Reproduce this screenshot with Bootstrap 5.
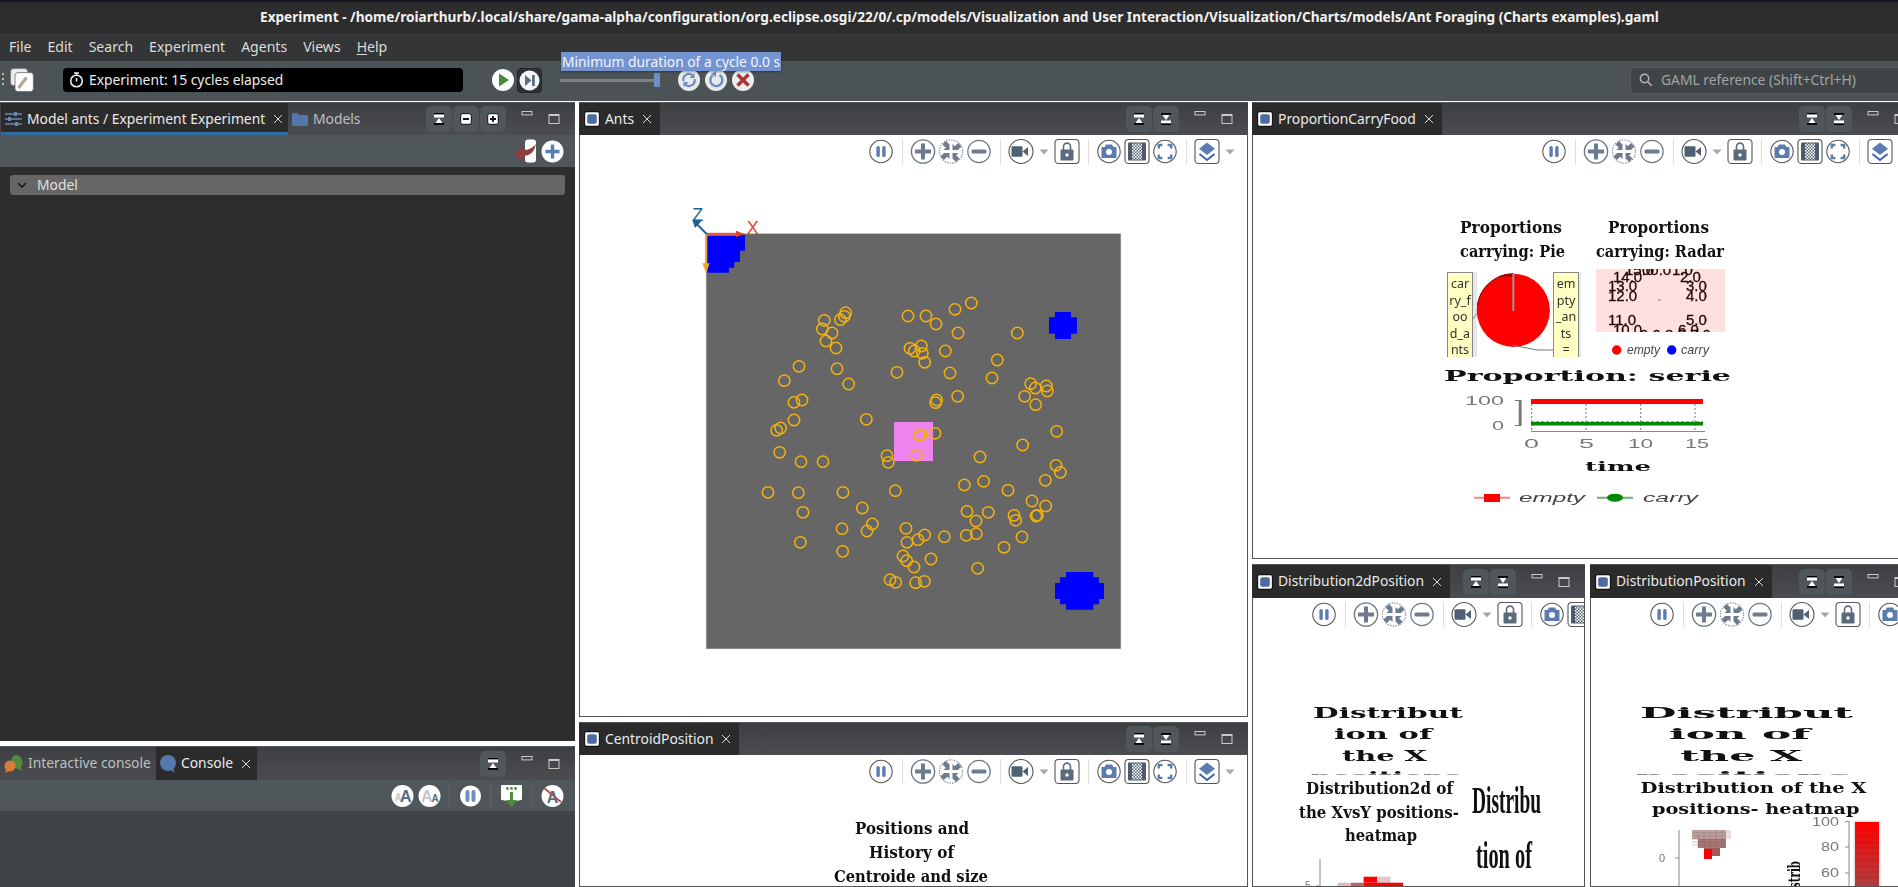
<!DOCTYPE html>
<html lang="en">
<head>
<meta charset="utf-8">
<title>Experiment - Ant Foraging</title>
<link href="https://cdn.jsdelivr.net/npm/bootstrap@5.3.0/dist/css/bootstrap.min.css" rel="stylesheet">
<style>
html,body{height:100%;margin:0;overflow:hidden;background:#fff}
body{font-family:"Noto Sans",sans-serif;font-size:13.85px;color:#e4e4e4;width:1898px;height:887px;position:relative}
svg{display:block;flex:none}
.deskline{height:2px;background:#15131f}
.titlebar{height:31px;background:#2d2d2d;color:#f2f2f2;font-weight:700;font-size:13.63px;white-space:nowrap;padding-left:260px;display:flex;align-items:center}
.menubar{height:28px;background:#333536;display:flex;align-items:center;gap:16px;padding-left:9px;color:#dcdcdc;font-size:14.05px}
.menubar u{text-underline-offset:2px}
.maintools{height:40px;padding-bottom:2px;background:#4c5356;display:flex;align-items:center}
.grip{width:2px;height:14px;margin-left:2px;background:repeating-linear-gradient(#b8b8b8 0 2px,transparent 2px 5px)}
.editic{margin-left:6px}
.statusbox{margin-left:29px;width:400px;height:24px;background:#000;border-radius:4px;display:flex;align-items:center;padding-left:6px;gap:5px;color:#ececec}
.playic{margin-left:28px}
.stepbox{margin-left:2px;width:25px;height:25px;background:#2f3234;border:1px solid #232526;border-radius:4px;display:flex;align-items:center;justify-content:center}
.slidertrack{margin-left:18px;width:100px;height:3px;background:#7c8184;position:relative}
.sliderthumb{position:absolute;right:0;top:-6px;width:6px;height:14px;background:#6f8fc7;border-radius:1px}
.cycleic{margin-left:3px}
.cycleic.firstic{margin-left:17px}
.findbox{margin-left:auto;width:268px;height:27px;background:#3f4447;border:1px solid #565c5f;border-right:0;border-radius:3px 0 0 3px;display:flex;align-items:center;padding-left:8px;gap:8px;color:#a0a4a6}
.durtip{position:absolute;left:561px;top:52px;height:19px;padding:0 1px;background:#7393d1;color:#f3f6fc;line-height:19px;font-size:13.8px;white-space:nowrap;box-shadow:0 1px 2px rgba(0,0,0,.35)}
.workbench{width:1921px;height:785px;display:grid;grid-template-columns:575px 669px 669px;column-gap:4px;overflow:hidden;margin-top:1px;background:#fff}
.wcol{display:flex;flex-direction:column;gap:5px;min-height:0;height:785px}
.wrow{display:flex;gap:5px;flex:1;min-height:0}
.pane{display:flex;flex-direction:column;min-height:0;min-width:0}
.pane-model{height:639px;background:#2e2e2e}
.pane-console{flex:1;background:#3f4447}
.pane-ants{height:615px}
.pane-carry{height:457px}
.pane-fill{flex:1}
.pane-d2{width:333px}
.pane-d1{width:331px}
.phead{height:33px;flex:none;display:flex;align-items:stretch;background:linear-gradient(#3d3f42,#4c4d50);border-top:1px solid #55585a}
.phead.tallhead{height:34px}
.ptab{display:flex;align-items:center;background:#2b2b2b;padding:0 8px 0 5px;gap:5px;color:#eaeaea;white-space:nowrap}
.ptab.ptab-active-blue{box-shadow:inset 0 -3px 0 #2d6ba3;margin-left:1px;width:287px;padding-left:4px}
.ptab-flat{background:none;color:#bcc0c2;padding-left:4px}
.ptab-interactive{width:156px}
.ptab-console{width:101px;padding-left:4px}
.xclose{margin-left:3px}
.hctl{margin-left:auto;display:flex;align-items:center;padding-right:14px}
.hbtn{width:26px;height:26px;background:#50575a;border-radius:5px;margin-left:1px;display:flex;align-items:center;justify-content:center}
.hmin{margin-left:14px}
.hmax{margin-left:13px}
.vtools{height:32px;flex:none;background:#fff;display:flex;align-items:center;padding-left:287px;border-left:1px solid #555;border-right:1px solid #555;overflow:hidden}
.vtools.narrowtools{padding-left:57px;height:33px}
.vsep{width:1px;height:25px;background:#ddd;margin:0 6.5px;flex:none}
.pbody{flex:1;background:#fff;border:1px solid #555;border-top:0;overflow:hidden;min-height:0}
.chartblur{filter:blur(.3px)}
.ptools{height:32px;flex:none;background:#50575a;display:flex;align-items:center;justify-content:flex-end;padding-right:11px}
.ctools{height:31px;flex:none;background:#50575a;display:flex;align-items:center;justify-content:flex-end;padding-right:9.5px}
.csep{width:1px;height:25px;background:#5d6467;margin:0 6.5px}
.modelbody{padding:8px 10px}
.modelrow{height:20px;background:#666;border-radius:3px;display:flex;align-items:center;padding-left:7px;gap:10px;color:#e0e0e0}
.fs{font-family:"DejaVu Serif",serif;font-weight:700;fill:#111}
.ls{font-family:"Liberation Serif",serif;font-weight:700;fill:#111}
.sa{font-family:"Liberation Sans",sans-serif;fill:#777}
.it{font-family:"Liberation Sans",sans-serif;font-style:italic;fill:#444}
.lab{font-family:"Noto Sans",sans-serif;fill:#333;font-size:12.5px;text-anchor:middle}
.rad{font-family:"Liberation Sans",sans-serif;fill:#220808;stroke:#220808;stroke-width:.3;font-size:15px}
</style>
</head>
<body>
<svg width="0" height="0" class="position-absolute">
<defs>
<pattern id="dotp" width="3" height="3" patternUnits="userSpaceOnUse"><rect width="3" height="3" fill="#5a6878"/><rect width="1.5" height="1.5" fill="#fff"/><rect x="1.5" y="1.5" width="1.5" height="1.5" fill="#fff"/></pattern>
<linearGradient id="bargrad" x1="0" y1="0" x2="0" y2="1"><stop offset="0" stop-color="#f00"/><stop offset="1" stop-color="#a84545"/></linearGradient>
<symbol id="i-pause" viewBox="0 0 28 33"><circle cx="14" cy="16.5" r="11.2" fill="#fff" stroke="#555" stroke-width="1.1"/><rect x="9.4" y="11" width="3.4" height="11" rx="1.6" fill="#5c7cb0"/><rect x="15.2" y="11" width="3.4" height="11" rx="1.6" fill="#5c7cb0"/></symbol>
<symbol id="i-plus" viewBox="0 0 28 33"><circle cx="14" cy="16.5" r="11.6" fill="#fff" stroke="#6e7784" stroke-width="1.4"/><path d="M14 8.5v16M6 16.5h16" stroke="#6c7b90" stroke-width="4"/></symbol>
<symbol id="i-fit" viewBox="0 0 28 33"><circle cx="14" cy="16.5" r="11.6" fill="#fff" stroke="#8b8f95" stroke-width="1.2" stroke-dasharray="1.4 1.2"/><g fill="#6c7b90"><path d="M12.5 15H6.500L8.800 12.700L5.500 9.400L8.900 6L12.200 9.300L12.500 9z"/><path d="M12.5 15H6.500L8.800 12.700L5.500 9.400L8.900 6L12.200 9.300L12.500 9z" transform="rotate(90 14 16.5)"/><path d="M12.5 15H6.500L8.800 12.700L5.500 9.400L8.900 6L12.200 9.300L12.500 9z" transform="rotate(180 14 16.5)"/><path d="M12.5 15H6.500L8.800 12.700L5.500 9.400L8.900 6L12.200 9.300L12.500 9z" transform="rotate(270 14 16.5)"/></g></symbol>
<symbol id="i-minus" viewBox="0 0 28 33"><circle cx="14" cy="16.5" r="11.2" fill="#fff" stroke="#6e7784" stroke-width="1.2"/><rect x="6.5" y="14.5" width="15" height="4" rx="1.5" fill="#6c7b90"/></symbol>
<symbol id="i-cam" viewBox="0 0 28 33"><circle cx="14" cy="16.5" r="12" fill="#fff" stroke="#555" stroke-width="1.1"/><rect x="4.5" y="11.2" width="11" height="10.6" rx="1.2" fill="#4f6076"/><path d="M15.5 16.5l5.5-4.6v9.2z" fill="#4f6076"/></symbol>
<symbol id="i-lock" viewBox="0 0 28 33"><rect x="2" y="4.5" width="24" height="24" rx="3.5" fill="#fff" stroke="#555" stroke-width="1.1"/><path d="M10.5 15v-3.4a3.5 3.5 0 0 1 7 0V15" fill="none" stroke="#5c6a7d" stroke-width="1.6"/><rect x="7.5" y="14.5" width="13" height="11" rx="1" fill="#5c6a7d"/><circle cx="14" cy="20" r="1.7" fill="#fff"/></symbol>
<symbol id="i-snap" viewBox="0 0 28 33"><circle cx="14" cy="16.5" r="11.2" fill="#fff" stroke="#555" stroke-width="1.1"/><path d="M6.5 12h3l1.6-2.5h5.8l1.6 2.5h3v11h-15z" fill="#5c7cb0"/><circle cx="14" cy="17" r="3" fill="#fff"/></symbol>
<symbol id="i-tex" viewBox="0 0 28 33"><rect x="2" y="4.5" width="24" height="24" rx="3.5" fill="#fff" stroke="#555" stroke-width="1.1"/><rect x="5" y="7.5" width="18" height="18" rx="1" fill="#4d5b6c"/><rect x="9" y="8.500" width="10" height="16" fill="url(#dotp)"/></symbol>
<symbol id="i-full" viewBox="0 0 28 33"><circle cx="14" cy="16.5" r="11.2" fill="#fff" stroke="#555" stroke-width="1.1"/><path d="M7.8 13.5v-3.5h3.6M20.2 13.5v-3.5h-3.6M7.8 19.5v3.5h3.6M20.2 19.5v3.5h-3.6" fill="none" stroke="#5c7cb0" stroke-width="2.4"/></symbol>
<symbol id="i-layers" viewBox="0 0 28 33"><rect x="2" y="4.5" width="24" height="24" rx="3.5" fill="#fff" stroke="#555" stroke-width="1.1"/><path d="M14 7.5l8 6.2-8 6.2-8-6.2z" fill="#5c7cb0"/><path d="M6.5 19l7.5 6 7.5-6" fill="none" stroke="#3b67aa" stroke-width="2"/></symbol>
<symbol id="i-drop" viewBox="0 0 18 33"><path d="M4.5 14.5h9L9 19.5z" fill="#a8a8a8"/></symbol>
<symbol id="i-view" viewBox="0 0 16 16"><rect x=".6" y=".6" width="14.8" height="14.8" rx="2" fill="#fff" stroke="#111" stroke-width="1.1"/><rect x="3.2" y="3.2" width="9.6" height="9.6" rx="2" fill="#4d6aa2"/></symbol>
<symbol id="i-x" viewBox="0 0 10 10"><path d="M1 1l8 8M9 1l-8 8" stroke="#d8d8d8" stroke-width="1"/></symbol>
<symbol id="i-min" viewBox="0 0 14 26"><rect x="2" y="5.5" width="10" height="3.4" fill="none" stroke="#c9c9c9"/></symbol>
<symbol id="i-max" viewBox="0 0 14 26"><rect x="2" y="8.5" width="10" height="9" fill="none" stroke="#c9c9c9"/><path d="M2 9h10" stroke="#c9c9c9" stroke-width="2"/></symbol>
<symbol id="i-hup" viewBox="0 0 12 12"><rect x="1" y="0" width="10" height="1.5" fill="#000"/><rect x="1" y="1.5" width="10" height="3" fill="#fff"/><path d="M6 5l3.5 5h-7z" fill="#fff"/><rect x="1" y="10" width="10" height="1.8" fill="#000"/></symbol>
<symbol id="i-hdown" viewBox="0 0 12 12"><rect x="1" y="0" width="10" height="1.8" fill="#000"/><path d="M6 7l3.5-5h-7z" fill="#fff"/><rect x="1" y="7.5" width="10" height="3" fill="#fff"/><rect x="1" y="10.5" width="10" height="1.5" fill="#000"/></symbol>
<symbol id="i-sq-minus" viewBox="0 0 12 12"><rect x=".7" y=".7" width="10.6" height="10.6" rx="2" fill="#fff" stroke="#111"/><rect x="3" y="5" width="6" height="2" fill="#111"/></symbol>
<symbol id="i-sq-plus" viewBox="0 0 12 12"><rect x=".7" y=".7" width="10.6" height="10.6" rx="2" fill="#fff" stroke="#111"/><path d="M3 6h6M6 3v6" stroke="#111" stroke-width="1.8"/></symbol>
</defs>
</svg>

<div class="deskline"></div>
<div class="titlebar">Experiment - /home/roiarthurb/.local/share/gama-alpha/configuration/org.eclipse.osgi/22/0/.cp/models/Visualization and User Interaction/Visualization/Charts/models/Ant Foraging (Charts examples).gaml</div>
<div class="menubar"><span>File</span><span>Edit</span><span>Search</span><span>Experiment</span><span>Agents</span><span>Views</span><span><u>H</u>elp</span></div>

<div class="maintools">
  <span class="grip"></span>
  <svg class="editic" width="24" height="24" viewBox="0 0 24 24"><rect x=".6" y=".6" width="17" height="17" rx="3" fill="#eee" stroke="#777" stroke-width=".8"/><rect x="5" y="4.6" width="18.4" height="19" rx="3" fill="#fff" stroke="#666" stroke-width=".8"/><path d="M8.5 20l8-10.5" stroke="#b3a48c" stroke-width="3"/></svg>
  <div class="statusbox"><svg width="15" height="16" viewBox="0 0 15 16"><circle cx="7.5" cy="9" r="5.8" fill="none" stroke="#eee" stroke-width="1.6"/><path d="M5 1h5M7.500 1v2M7.500 6v3.500" stroke="#eee" stroke-width="1.5"/></svg><span>Experiment: 15 cycles elapsed</span></div>
  <svg class="playic" width="24" height="24" viewBox="0 0 24 24"><circle cx="12" cy="12" r="11" fill="#fff"/><path d="M8 5.500l10 6.500-10 6.500z" fill="#4b8b3b"/></svg>
  <div class="stepbox"><svg width="21" height="21" viewBox="0 0 21 21"><circle cx="10.500" cy="10.500" r="10" fill="#f4f4f4"/><path d="M6 5l6.500 5.500-6.500 5.500z" fill="#5b7085"/><rect x="13" y="5" width="2.800" height="11" fill="#5b7085"/></svg></div>
  <div class="slidertrack"><span class="sliderthumb"></span></div>
  <svg class="cycleic firstic" width="24" height="24" viewBox="0 0 24 24"><circle cx="12" cy="12" r="11" fill="#e9e9e9"/><path d="M6.500 13a5.500 5.500 0 0 1 9-5.500M17.500 11a5.500 5.500 0 0 1-9 5.500" fill="none" stroke="#6a8cc0" stroke-width="2.200"/><path d="M17.500 5v5h-5zM6.500 19v-5h5z" fill="#6a8cc0"/></svg>
  <svg class="cycleic" width="24" height="24" viewBox="0 0 24 24"><circle cx="12" cy="12" r="11" fill="#e9e9e9"/><path d="M8.500 7.500a6 6 0 1 0 7-.5" fill="none" stroke="#6a8cc0" stroke-width="2.400"/><path d="M12 3v6l-5-3z" fill="#6a8cc0"/></svg>
  <svg class="cycleic" width="24" height="24" viewBox="0 0 24 24"><circle cx="12" cy="12" r="11" fill="#ececec"/><path d="M6.500 6.500l11 11M17.500 6.500l-11 11" stroke="#a83535" stroke-width="3.400"/></svg>
  <div class="findbox"><svg width="14" height="14" viewBox="0 0 14 14"><circle cx="5.500" cy="5.500" r="4.200" fill="none" stroke="#b5b8ba" stroke-width="1.400"/><path d="M8.700 8.700l4 4" stroke="#b5b8ba" stroke-width="1.600"/></svg><span>GAML reference (Shift+Ctrl+H)</span></div>
</div>
<div class="durtip">Minimum duration of a cycle 0.0 s</div>

<div class="workbench">
  <!-- left column -->
  <div class="wcol">
    <section class="pane pane-model">
      <div class="phead">
        <div class="ptab ptab-active-blue"><svg width="17" height="16" viewBox="0 0 17 16"><path d="M0 3h17M0 8h17M0 13h17" stroke="#6a87b8" stroke-width="1.500"/><rect x="9" y="1" width="3" height="4" fill="#6a87b8"/><rect x="3" y="6" width="3" height="4" fill="#6a87b8"/><rect x="10" y="11" width="3" height="4" fill="#6a87b8"/></svg><span>Model ants / Experiment Experiment</span><svg class="xclose" width="10" height="10"><use href="#i-x"/></svg></div>
        <div class="ptab ptab-flat"><svg width="16" height="13" viewBox="0 0 16 13"><path d="M0 1.500q0-1.500 1.500-1.500h4l1.500 2h7.500q1.500 0 1.500 1.500v8q0 1.500-1.500 1.500h-13q-1.500 0-1.500-1.500z" fill="#5576aa"/></svg><span>Models</span></div>
        <div class="hctl"><span class="hbtn"><svg width="12" height="12"><use href="#i-hup"/></svg></span><span class="hbtn"><svg width="12" height="12"><use href="#i-sq-minus"/></svg></span><span class="hbtn"><svg width="12" height="12"><use href="#i-sq-plus"/></svg></span><svg class="hmin" width="14" height="26"><use href="#i-min"/></svg><svg class="hmax" width="14" height="26"><use href="#i-max"/></svg></div>
      </div>
      <div class="ptools">
        <svg width="24" height="24" viewBox="0 0 24 24"><rect x="12" y="0.500" width="11" height="23" rx="3" fill="#fff"/><path d="M0 14L11 8V11Q18 11 23 5Q21 16 11 17V23z" fill="#8c3f3f"/></svg>
        <svg class="ms-1" width="23" height="23" viewBox="0 0 23 23"><circle cx="11.500" cy="11.500" r="11" fill="#fff"/><path d="M11.500 4.500v14M4.500 11.500h14" stroke="#5c7cb0" stroke-width="3.400"/></svg>
      </div>
      <div class="modelbody"><div class="modelrow"><svg width="10" height="6" viewBox="0 0 10 6"><path d="M1 1l4 4 4-4" fill="none" stroke="#111" stroke-width="1.500"/></svg><span>Model</span></div></div>
    </section>
    <section class="pane pane-console">
      <div class="phead tallhead">
        <div class="ptab ptab-flat ptab-interactive"><svg width="19" height="20" viewBox="0 0 19 20"><path d="M11 1a7.500 7.500 0 0 1 6 12l1 4-4-2a7.500 7.500 0 0 1-3-14z" fill="#528a3f"/><circle cx="6" cy="12" r="5.500" fill="#d77a3a"/><path d="M2 15l-1 4 4-2z" fill="#d77a3a"/></svg><span class="ms-n1">Interactive console</span></div>
        <div class="ptab ptab-console"><svg width="16" height="20" viewBox="0 0 16 20"><circle cx="8" cy="9" r="8" fill="#5577aa"/><path d="M8 14l7 5-3-7z" fill="#5577aa"/></svg><span>Console</span><svg class="xclose" width="10" height="10"><use href="#i-x"/></svg></div>
        <div class="hctl"><span class="hbtn"><svg width="12" height="12"><use href="#i-hup"/></svg></span><svg class="hmin" width="14" height="26"><use href="#i-min"/></svg><svg class="hmax" width="14" height="26"><use href="#i-max"/></svg></div>
      </div>
      <div class="ctools">
        <svg width="27" height="24" viewBox="0 0 27 24"><circle cx="13.500" cy="12" r="11" fill="#fff"/><text x="5.500" y="17" font-family="Liberation Sans" font-weight="700" font-size="10" fill="#c3c6ca">A</text><text x="11" y="18" font-family="Liberation Sans" font-weight="700" font-size="16" fill="#5a6a7e">A</text></svg>
        <svg width="27" height="24" viewBox="0 0 27 24"><circle cx="13.500" cy="12" r="11" fill="#fff"/><text x="5" y="18" font-family="Liberation Sans" font-weight="700" font-size="16" fill="#c3c6ca">A</text><text x="15.500" y="18" font-family="Liberation Sans" font-weight="700" font-size="10" fill="#5a6a7e">A</text></svg>
        <span class="csep"></span>
        <svg width="27" height="24" viewBox="0 0 27 24"><circle cx="13.500" cy="12" r="10.500" fill="#fff"/><rect x="8.500" y="6" width="4" height="12" rx="2" fill="#6f8fc0"/><rect x="14.500" y="6" width="4" height="12" rx="2" fill="#6f8fc0"/></svg>
        <span class="csep"></span>
        <svg width="27" height="26" viewBox="0 0 27 26"><path d="M4 2h19q1 0 1 1v13q0 1-1 1l-5 1-4.500 3-4.500-3-5-1q-1 0-1-1V3q0-1 1-1z" fill="#fff"/><circle cx="9.500" cy="5.500" r="1.400" fill="#4f8c3c"/><circle cx="13.500" cy="5.500" r="1.400" fill="#4f8c3c"/><circle cx="17.500" cy="5.500" r="1.400" fill="#4f8c3c"/><path d="M13.500 9v10" stroke="#4f8c3c" stroke-width="3"/><path d="M8 17h11l-5.500 7z" fill="#4f8c3c"/></svg>
        <span class="csep"></span>
        <svg width="27" height="24" viewBox="0 0 27 24"><circle cx="13.500" cy="12" r="11" fill="#fff"/><text x="7.700" y="18.500" font-family="Liberation Sans" font-weight="700" font-size="16" fill="#5a6a7e">A</text><path d="M5 4l17 14" stroke="#b05050" stroke-width="1.800"/></svg>
      </div>
    </section>
  </div>

  <!-- middle column -->
  <div class="wcol">
    <section class="pane pane-ants">
      <div class="phead">
        <div class="ptab"><svg width="16" height="16"><use href="#i-view"/></svg><span>Ants</span><svg class="xclose" width="10" height="10"><use href="#i-x"/></svg></div>
        <div class="hctl"><span class="hbtn"><svg width="12" height="12"><use href="#i-hup"/></svg></span><span class="hbtn"><svg width="12" height="12"><use href="#i-hdown"/></svg></span><svg class="hmin" width="14" height="26"><use href="#i-min"/></svg><svg class="hmax" width="14" height="26"><use href="#i-max"/></svg></div>
      </div>
      <div class="vtools"><svg width="28" height="33"><use href="#i-pause"/></svg><span class="vsep"></span><svg width="28" height="33"><use href="#i-plus"/></svg><svg width="28" height="33"><use href="#i-fit"/></svg><svg width="28" height="33"><use href="#i-minus"/></svg><span class="vsep"></span><svg width="28" height="33"><use href="#i-cam"/></svg><svg width="18" height="33"><use href="#i-drop"/></svg><svg width="28" height="33"><use href="#i-lock"/></svg><span class="vsep"></span><svg width="28" height="33"><use href="#i-snap"/></svg><svg width="28" height="33"><use href="#i-tex"/></svg><svg width="28" height="33"><use href="#i-full"/></svg><span class="vsep"></span><svg width="28" height="33"><use href="#i-layers"/></svg><svg width="18" height="33"><use href="#i-drop"/></svg></div>
      <div class="pbody">
        <svg width="667" height="549" viewBox="580 167 667 549">
          <g transform="translate(680 200) scale(.33333)">
            <rect x="78" y="100" width="1245" height="1247" fill="#666" stroke="#ddd" stroke-width="2"/>
            <path d="M83 105H195V152H180V186H163V203H147V218H83z" fill="#00f"/>
            <path d="M1125 336H1173V352H1191V401H1173V417H1125V401H1107V352H1125z" fill="#00f"/>
            <path d="M1158 1116H1240V1132H1257V1149H1272V1197H1257V1213H1240V1229H1158V1213H1140V1197H1125V1149H1140V1132H1158z" fill="#00f"/>
            <rect x="642" y="666" width="117" height="117" fill="#ee82ee"/>
            <g fill="none" stroke="#f5b20a" stroke-width="4.500">
<circle cx="497" cy="338" r="17"/><circle cx="493" cy="349" r="17"/><circle cx="481" cy="359" r="17"/><circle cx="433" cy="361" r="17"/><circle cx="427" cy="387" r="17"/><circle cx="456" cy="399" r="17"/><circle cx="438" cy="423" r="17"/><circle cx="468" cy="444" r="17"/><circle cx="357" cy="499" r="17"/><circle cx="313" cy="542" r="17"/><circle cx="471" cy="506" r="17"/><circle cx="506" cy="552" r="17"/><circle cx="342" cy="607" r="17"/><circle cx="366" cy="600" r="17"/><circle cx="342" cy="660" r="17"/><circle cx="302" cy="684" r="17"/><circle cx="290" cy="691" r="17"/><circle cx="299" cy="757" r="17"/><circle cx="363" cy="785" r="17"/><circle cx="429" cy="785" r="17"/><circle cx="264" cy="877" r="17"/><circle cx="355" cy="878" r="17"/><circle cx="489" cy="877" r="17"/><circle cx="369" cy="937" r="17"/><circle cx="486" cy="986" r="17"/><circle cx="361" cy="1027" r="17"/><circle cx="488" cy="1054" r="17"/><circle cx="547" cy="924" r="17"/><circle cx="577" cy="972" r="17"/><circle cx="561" cy="993" r="17"/><circle cx="559" cy="658" r="17"/><circle cx="621" cy="767" r="17"/><circle cx="625" cy="787" r="17"/><circle cx="646" cy="872" r="17"/><circle cx="684" cy="348" r="17"/><circle cx="738" cy="348" r="17"/><circle cx="768" cy="372" r="17"/><circle cx="825" cy="328" r="17"/><circle cx="874" cy="309" r="17"/><circle cx="834" cy="399" r="17"/><circle cx="1012" cy="399" r="17"/><circle cx="690" cy="445" r="17"/><circle cx="703" cy="453" r="17"/><circle cx="724" cy="438" r="17"/><circle cx="727" cy="460" r="17"/><circle cx="734" cy="487" r="17"/><circle cx="796" cy="453" r="17"/><circle cx="651" cy="517" r="17"/><circle cx="810" cy="519" r="17"/><circle cx="952" cy="480" r="17"/><circle cx="936" cy="534" r="17"/><circle cx="770" cy="600" r="17"/><circle cx="767" cy="608" r="17"/><circle cx="833" cy="589" r="17"/><circle cx="1052" cy="551" r="17"/><circle cx="1066" cy="564" r="17"/><circle cx="1099" cy="558" r="17"/><circle cx="1102" cy="573" r="17"/><circle cx="1034" cy="589" r="17"/><circle cx="1067" cy="614" r="17"/><circle cx="1130" cy="694" r="17"/><circle cx="1028" cy="735" r="17"/><circle cx="765" cy="700" r="17"/><circle cx="718" cy="705" r="17"/><circle cx="723" cy="705" r="17"/><circle cx="710" cy="766" r="17"/><circle cx="900" cy="771" r="17"/><circle cx="1128" cy="796" r="17"/><circle cx="1141" cy="817" r="17"/><circle cx="1096" cy="841" r="17"/><circle cx="853" cy="855" r="17"/><circle cx="911" cy="844" r="17"/><circle cx="984" cy="871" r="17"/><circle cx="1056" cy="903" r="17"/><circle cx="1097" cy="918" r="17"/><circle cx="861" cy="934" r="17"/><circle cx="925" cy="937" r="17"/><circle cx="888" cy="963" r="17"/><circle cx="1002" cy="946" r="17"/><circle cx="1007" cy="961" r="17"/><circle cx="1068" cy="948" r="17"/><circle cx="1072" cy="946" r="17"/><circle cx="678" cy="985" r="17"/><circle cx="734" cy="1005" r="17"/><circle cx="714" cy="1019" r="17"/><circle cx="681" cy="1027" r="17"/><circle cx="793" cy="1010" r="17"/><circle cx="859" cy="1006" r="17"/><circle cx="889" cy="1001" r="17"/><circle cx="1026" cy="1011" r="17"/><circle cx="972" cy="1042" r="17"/><circle cx="669" cy="1068" r="17"/><circle cx="680" cy="1082" r="17"/><circle cx="702" cy="1101" r="17"/><circle cx="753" cy="1077" r="17"/><circle cx="893" cy="1105" r="17"/><circle cx="630" cy="1139" r="17"/><circle cx="647" cy="1147" r="17"/><circle cx="707" cy="1148" r="17"/><circle cx="733" cy="1144" r="17"/>
            </g>
            <path d="M80 102H172" stroke="#f2bcb0" stroke-width="9"/>
            <path d="M80 102H172" stroke="#e0452a" stroke-width="5"/>
            <path d="M168 92l26 10-26 10z" fill="#e0452a"/>
            <path d="M78 105V195" stroke="#f5a623" stroke-width="6"/>
            <path d="M67 190h22l-11 28z" fill="#f5a623"/>
            <path d="M80 102L52 74" stroke="#1b6294" stroke-width="6"/>
            <path d="M37 60l28 2-20 22z" fill="#1b6294"/>
            <text x="200" y="102" font-family="Liberation Sans" font-size="54" fill="#dc4a2e">X</text>
            <text x="37" y="62" font-family="Liberation Sans" font-size="54" fill="#1b6294">Z</text>
          </g>
        </svg>
      </div>
    </section>
    <section class="pane pane-fill">
      <div class="phead">
        <div class="ptab"><svg width="16" height="16"><use href="#i-view"/></svg><span>CentroidPosition</span><svg class="xclose" width="10" height="10"><use href="#i-x"/></svg></div>
        <div class="hctl"><span class="hbtn"><svg width="12" height="12"><use href="#i-hup"/></svg></span><span class="hbtn"><svg width="12" height="12"><use href="#i-hdown"/></svg></span><svg class="hmin" width="14" height="26"><use href="#i-min"/></svg><svg class="hmax" width="14" height="26"><use href="#i-max"/></svg></div>
      </div>
      <div class="vtools"><svg width="28" height="33"><use href="#i-pause"/></svg><span class="vsep"></span><svg width="28" height="33"><use href="#i-plus"/></svg><svg width="28" height="33"><use href="#i-fit"/></svg><svg width="28" height="33"><use href="#i-minus"/></svg><span class="vsep"></span><svg width="28" height="33"><use href="#i-cam"/></svg><svg width="18" height="33"><use href="#i-drop"/></svg><svg width="28" height="33"><use href="#i-lock"/></svg><span class="vsep"></span><svg width="28" height="33"><use href="#i-snap"/></svg><svg width="28" height="33"><use href="#i-tex"/></svg><svg width="28" height="33"><use href="#i-full"/></svg><span class="vsep"></span><svg width="28" height="33"><use href="#i-layers"/></svg><svg width="18" height="33"><use href="#i-drop"/></svg></div>
      <div class="pbody">
        <svg width="667" height="100" viewBox="580 787 667 100" class="chartblur">
          <text class="fs" x="855" y="834" font-size="16.5" textLength="114" lengthAdjust="spacingAndGlyphs">Positions and</text>
          <text class="fs" x="869" y="858" font-size="16.5" textLength="85" lengthAdjust="spacingAndGlyphs">History of</text>
          <text class="fs" x="834" y="882" font-size="16.5" textLength="154" lengthAdjust="spacingAndGlyphs">Centroide and size</text>
        </svg>
      </div>
    </section>
  </div>

  <!-- right column -->
  <div class="wcol">
    <section class="pane pane-carry">
      <div class="phead">
        <div class="ptab"><svg width="16" height="16"><use href="#i-view"/></svg><span>ProportionCarryFood</span><svg class="xclose" width="10" height="10"><use href="#i-x"/></svg></div>
        <div class="hctl"><span class="hbtn"><svg width="12" height="12"><use href="#i-hup"/></svg></span><span class="hbtn"><svg width="12" height="12"><use href="#i-hdown"/></svg></span><svg class="hmin" width="14" height="26"><use href="#i-min"/></svg><svg class="hmax" width="14" height="26"><use href="#i-max"/></svg></div>
      </div>
      <div class="vtools"><svg width="28" height="33"><use href="#i-pause"/></svg><span class="vsep"></span><svg width="28" height="33"><use href="#i-plus"/></svg><svg width="28" height="33"><use href="#i-fit"/></svg><svg width="28" height="33"><use href="#i-minus"/></svg><span class="vsep"></span><svg width="28" height="33"><use href="#i-cam"/></svg><svg width="18" height="33"><use href="#i-drop"/></svg><svg width="28" height="33"><use href="#i-lock"/></svg><span class="vsep"></span><svg width="28" height="33"><use href="#i-snap"/></svg><svg width="28" height="33"><use href="#i-tex"/></svg><svg width="28" height="33"><use href="#i-full"/></svg><span class="vsep"></span><svg width="28" height="33"><use href="#i-layers"/></svg><svg width="18" height="33"><use href="#i-drop"/></svg></div>
      <div class="pbody">
        <svg width="667" height="391" viewBox="1253 167 667 391" class="chartblur">
          <defs><clipPath id="radclip"><rect x="1596" y="269" width="129" height="63"/></clipPath><clipPath id="pieclip"><rect x="1440" y="265" width="150" height="92"/></clipPath></defs>
          <text class="fs" x="1460" y="233" font-size="16.5" textLength="102" lengthAdjust="spacingAndGlyphs">Proportions</text>
          <text class="fs" x="1460" y="257" font-size="16.5" textLength="105" lengthAdjust="spacingAndGlyphs">carrying: Pie</text>
          <text class="fs" x="1608" y="233" font-size="16.5" textLength="101" lengthAdjust="spacingAndGlyphs">Proportions</text>
          <text class="fs" x="1596" y="257" font-size="16.5" textLength="128" lengthAdjust="spacingAndGlyphs">carrying: Radar</text>
          <g clip-path="url(#pieclip)">
            <rect x="1473" y="272" width="4" height="90" fill="#e8e8e8"/><rect x="1578" y="272" width="3" height="90" fill="#e8e8e8"/>
            <rect x="1447.500" y="272.500" width="25" height="90" fill="#ffffc4" stroke="#888"/>
            <rect x="1553.500" y="272.500" width="25" height="90" fill="#ffffc4" stroke="#888"/>
            <text class="lab" x="1460" y="288">car</text><text class="lab" x="1460" y="305">ry_f</text><text class="lab" x="1460" y="321">oo</text><text class="lab" x="1460" y="338">d_a</text><text class="lab" x="1460" y="354">nts</text>
            <text class="lab" x="1566" y="288">em</text><text class="lab" x="1566" y="305">pty</text><text class="lab" x="1566" y="321">_an</text><text class="lab" x="1566" y="338">ts</text><text class="lab" x="1566" y="354">=</text>
            <path d="M1473 319l4-6" stroke="#888" fill="none"/>
            <circle cx="1513.300" cy="310.300" r="36.600" fill="#f00"/>
            <path d="M1513.300 273.700a36.600 36.600 0 0 0-36 32" fill="none" stroke="#700" stroke-width="1"/>
            <path d="M1497 277a36.600 36.600 0 0 1 16.300-3.300v2.500q-10 0-16.300 .8z" fill="#900"/>
            <path d="M1513.300 274v37" stroke="#999" stroke-width="2"/>
            <path d="M1512 345l25 5h16" stroke="#777" fill="none"/>
          </g>
          <rect x="1596" y="269" width="129" height="63" fill="#ffe0e0"/>
          <g clip-path="url(#radclip)">
            <text class="rad" x="1625" y="275">15.0</text><text class="rad" x="1642" y="275">00.0</text><text class="rad" x="1672" y="275">1.0</text>
            <text class="rad" x="1613" y="282">14.0</text><text class="rad" x="1680" y="282">2.0</text>
            <text class="rad" x="1608" y="291">13.0</text><text class="rad" x="1686" y="291">3.0</text>
            <text class="rad" x="1608" y="301">12.0</text><text class="rad" x="1686" y="301">4.0</text>
            <text class="rad" x="1608" y="325">11.0</text><text class="rad" x="1686" y="325">5.0</text>
            <text class="rad" x="1613" y="335">10.0</text><text class="rad" x="1678" y="335">6.0</text>
            <text class="rad" x="1640" y="340">9.0 8.0 7.0</text>
            <path d="M1658 300h3" stroke="#888"/>
          </g>
          <circle cx="1616.700" cy="350" r="4.700" fill="#f00"/>
          <text class="it" x="1627" y="354" font-size="13" textLength="33" lengthAdjust="spacingAndGlyphs">empty</text>
          <circle cx="1671.700" cy="350" r="4.700" fill="#00f"/>
          <text class="it" x="1681" y="354" font-size="13" textLength="28" lengthAdjust="spacingAndGlyphs">carry</text>
          <text class="fs" x="1444" y="381" font-size="14" textLength="287" lengthAdjust="spacingAndGlyphs">Proportion: serie</text>
          <text class="sa" x="1465" y="405" font-size="13" textLength="39" lengthAdjust="spacingAndGlyphs">100</text>
          <text class="sa" x="1492" y="430" font-size="13" textLength="12" lengthAdjust="spacingAndGlyphs">0</text>
          <path d="M1515 400.500h6v25h-6" fill="none" stroke="#777" stroke-width="1"/><path d="M1520 400v26" stroke="#777" stroke-width="2.500"/>
          <path d="M1531.700 404v28M1586 404v28M1640.700 404v28M1695 404v28" stroke="#777" stroke-dasharray="2 2"/>
          <rect x="1531" y="399" width="172" height="5" fill="#f00"/>
          <path d="M1531 421.500h172" stroke="#7cb87c" stroke-dasharray="3 2"/>
          <rect x="1531" y="422" width="172" height="3.500" fill="#080"/>
          <path d="M1531 431.500h174" stroke="#888"/>
          <text class="sa" x="1524" y="448" font-size="13" textLength="15" lengthAdjust="spacingAndGlyphs">0</text>
          <text class="sa" x="1579" y="448" font-size="13" textLength="15" lengthAdjust="spacingAndGlyphs">5</text>
          <text class="sa" x="1628" y="448" font-size="13" textLength="25" lengthAdjust="spacingAndGlyphs">10</text>
          <text class="sa" x="1685" y="448" font-size="13" textLength="24" lengthAdjust="spacingAndGlyphs">15</text>
          <text class="fs" x="1585" y="471" font-size="13" textLength="66" lengthAdjust="spacingAndGlyphs">time</text>
          <path d="M1474 497.700h36" stroke="#ff8080" stroke-width="2"/><rect x="1484" y="494" width="16" height="8" fill="#f00"/>
          <text class="it" x="1519" y="502" font-size="12" textLength="66" lengthAdjust="spacingAndGlyphs">empty</text>
          <path d="M1597 497.700h36" stroke="#70b070" stroke-width="2"/><ellipse cx="1615" cy="497.700" rx="8" ry="4" fill="#080"/>
          <text class="it" x="1643" y="502" font-size="12" textLength="55" lengthAdjust="spacingAndGlyphs">carry</text>
        </svg>
      </div>
    </section>
    <div class="wrow">
      <section class="pane pane-d2">
        <div class="phead tallhead">
          <div class="ptab"><svg width="16" height="16"><use href="#i-view"/></svg><span>Distribution2dPosition</span><svg class="xclose" width="10" height="10"><use href="#i-x"/></svg></div>
          <div class="hctl"><span class="hbtn"><svg width="12" height="12"><use href="#i-hup"/></svg></span><span class="hbtn"><svg width="12" height="12"><use href="#i-hdown"/></svg></span><svg class="hmin" width="14" height="26"><use href="#i-min"/></svg><svg class="hmax" width="14" height="26"><use href="#i-max"/></svg></div>
        </div>
        <div class="vtools narrowtools"><svg width="28" height="33"><use href="#i-pause"/></svg><span class="vsep"></span><svg width="28" height="33"><use href="#i-plus"/></svg><svg width="28" height="33"><use href="#i-fit"/></svg><svg width="28" height="33"><use href="#i-minus"/></svg><span class="vsep"></span><svg width="28" height="33"><use href="#i-cam"/></svg><svg width="18" height="33"><use href="#i-drop"/></svg><svg width="28" height="33"><use href="#i-lock"/></svg><span class="vsep"></span><svg width="28" height="33"><use href="#i-snap"/></svg><svg width="28" height="33"><use href="#i-tex"/></svg></div>
        <div class="pbody">
          <svg width="331" height="257" viewBox="1253 630 331 257" class="chartblur">
            <defs><clipPath id="d2clip"><rect x="1253" y="700" width="331" height="73.500"/></clipPath></defs>
            <g clip-path="url(#d2clip)">
              <text class="fs" x="1313" y="717" font-size="15" textLength="150" lengthAdjust="spacingAndGlyphs">Distribut</text>
              <text class="fs" x="1334" y="738" font-size="15" textLength="98" lengthAdjust="spacingAndGlyphs">ion of</text>
              <text class="fs" x="1342" y="760" font-size="15" textLength="85" lengthAdjust="spacingAndGlyphs">the X</text>
              <text class="fs" x="1311" y="780.500" font-size="15" textLength="150" lengthAdjust="spacingAndGlyphs">positions</text>
            </g>
            <text class="fs" x="1306" y="793" font-size="16.5" textLength="147" lengthAdjust="spacingAndGlyphs">Distribution2d of</text>
            <text class="fs" x="1299" y="817" font-size="16.5" textLength="160" lengthAdjust="spacingAndGlyphs">the XvsY positions-</text>
            <text class="fs" x="1345" y="840" font-size="16.5" textLength="72" lengthAdjust="spacingAndGlyphs">heatmap</text>
            <text class="ls" x="1472" y="812" font-size="37" textLength="69" lengthAdjust="spacingAndGlyphs">Distribu</text>
            <text class="ls" x="1476" y="867" font-size="37" textLength="56" lengthAdjust="spacingAndGlyphs">tion of</text>
            <path d="M1320 858v29M1316 885h4" stroke="#888"/>
            <text class="sa" x="1305" y="888" font-size="10">5</text>
            <rect x="1363.600" y="875.700" width="13.500" height="6" fill="#f00"/><rect x="1377" y="875.700" width="13.500" height="6" fill="#e2c8c8"/>
            <rect x="1337.600" y="881.700" width="13.500" height="6" fill="#dfbcbc"/><rect x="1351" y="881.700" width="12.700" height="6" fill="#b06a6a"/><rect x="1363.600" y="881.700" width="39.500" height="6" fill="#f00"/>
          </svg>
        </div>
      </section>
      <section class="pane pane-d1">
        <div class="phead tallhead">
          <div class="ptab"><svg width="16" height="16"><use href="#i-view"/></svg><span>DistributionPosition</span><svg class="xclose" width="10" height="10"><use href="#i-x"/></svg></div>
          <div class="hctl"><span class="hbtn"><svg width="12" height="12"><use href="#i-hup"/></svg></span><span class="hbtn"><svg width="12" height="12"><use href="#i-hdown"/></svg></span><svg class="hmin" width="14" height="26"><use href="#i-min"/></svg><svg class="hmax" width="14" height="26"><use href="#i-max"/></svg></div>
        </div>
        <div class="vtools narrowtools"><svg width="28" height="33"><use href="#i-pause"/></svg><span class="vsep"></span><svg width="28" height="33"><use href="#i-plus"/></svg><svg width="28" height="33"><use href="#i-fit"/></svg><svg width="28" height="33"><use href="#i-minus"/></svg><span class="vsep"></span><svg width="28" height="33"><use href="#i-cam"/></svg><svg width="18" height="33"><use href="#i-drop"/></svg><svg width="28" height="33"><use href="#i-lock"/></svg><span class="vsep"></span><svg width="28" height="33"><use href="#i-snap"/></svg></div>
        <div class="pbody">
          <svg width="329" height="257" viewBox="1591 630 329 257" class="chartblur">
            <defs><clipPath id="d1clip"><rect x="1591" y="700" width="329" height="73.500"/></clipPath></defs>
            <g clip-path="url(#d1clip)">
              <text class="fs" x="1640" y="717" font-size="15" textLength="213" lengthAdjust="spacingAndGlyphs">Distribut</text>
              <text class="fs" x="1669" y="738" font-size="15" textLength="141" lengthAdjust="spacingAndGlyphs">ion of</text>
              <text class="fs" x="1680" y="760" font-size="15" textLength="122" lengthAdjust="spacingAndGlyphs">the X</text>
              <text class="fs" x="1636" y="780.500" font-size="15" textLength="215" lengthAdjust="spacingAndGlyphs">positions</text>
            </g>
            <text class="fs" x="1640.500" y="792" font-size="15" textLength="226" lengthAdjust="spacingAndGlyphs">Distribution of the X</text>
            <text class="fs" x="1652" y="813" font-size="15" textLength="207.500" lengthAdjust="spacingAndGlyphs">positions- heatmap</text>
            <path d="M1679 829v58M1675 857h4" stroke="#888"/>
            <text class="sa" x="1659" y="861" font-size="11">0</text>
            <rect x="1692" y="829" width="39" height="9" fill="#eadddd"/>
            <rect x="1692" y="829" width="34" height="9" fill="#bfa3a3"/>
            <rect x="1698" y="838" width="28" height="9" fill="#a87878"/>
            <rect x="1704" y="847" width="16" height="8" fill="#a85858"/>
            <rect x="1704" y="848" width="8" height="10" fill="#f00"/>
            <path d="M1698 829v18M1704 829v18M1710 829v18M1716 829v18M1722 829v18M1692 832h34M1692 835h34M1692 838h34M1692 841h34M1692 844h34" stroke="#7b5b5b" stroke-opacity=".45" stroke-width=".8"/>
            <text class="fs" x="1800" y="887" font-size="16" transform="rotate(-90 1800 887)" textLength="27" lengthAdjust="spacingAndGlyphs">strib</text>
            <text class="sa" x="1812" y="825" font-size="13" textLength="27" lengthAdjust="spacingAndGlyphs">100</text>
            <text class="sa" x="1821" y="850" font-size="13" textLength="18" lengthAdjust="spacingAndGlyphs">80</text>
            <text class="sa" x="1821" y="876" font-size="13" textLength="18" lengthAdjust="spacingAndGlyphs">60</text>
            <path d="M1849 820v67M1845 820.500h4M1845 846h4M1845 872h4" stroke="#888"/>
            <rect x="1853.500" y="819.500" width="27" height="70" fill="#e4e4e4"/>
            <rect x="1855" y="821" width="24" height="70" fill="url(#bargrad)"/>
            <path d="M1855 829h24M1855 835h24M1855 841h24M1855 847h24M1855 853h24M1855 859h24M1855 865h24M1855 871h24M1855 877h24M1855 883h24" stroke="#700" stroke-opacity=".15"/>
          </svg>
        </div>
      </section>
    </div>
  </div>
</div>
<script src="https://cdn.jsdelivr.net/npm/bootstrap@5.3.0/dist/js/bootstrap.bundle.min.js"></script>
</body>
</html>
